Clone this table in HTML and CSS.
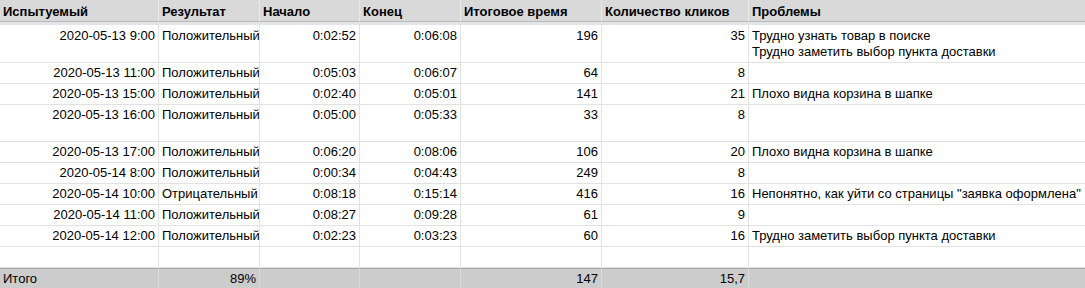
FILE: index.html
```html
<!DOCTYPE html>
<html lang="ru">
<head>
<meta charset="utf-8">
<title>Результаты тестирования</title>
<link rel="stylesheet" href="styles.css">
</head>
<body>
<table class="sheet">
  <colgroup>
    <col class="c1"><col class="c2"><col class="c3"><col class="c4"><col class="c5"><col class="c6"><col class="c7">
  </colgroup>
  <thead>
    <tr>
      <th>Испытуемый</th><th>Результат</th><th>Начало</th><th>Конец</th><th>Итоговое время</th><th>Количество кликов</th><th>Проблемы</th>
    </tr>
  </thead>
  <tbody>
    <tr class="two">
      <td class="num">2020-05-13 9:00</td><td>Положительный</td><td class="num">0:02:52</td><td class="num">0:06:08</td><td class="num">196</td><td class="num">35</td><td>Трудно узнать товар в поиске<br>Трудно заметить выбор пункта доставки</td>
    </tr>
    <tr>
      <td class="num">2020-05-13 11:00</td><td>Положительный</td><td class="num">0:05:03</td><td class="num">0:06:07</td><td class="num">64</td><td class="num">8</td><td></td>
    </tr>
    <tr>
      <td class="num">2020-05-13 15:00</td><td>Положительный</td><td class="num">0:02:40</td><td class="num">0:05:01</td><td class="num">141</td><td class="num">21</td><td>Плохо видна корзина в шапке</td>
    </tr>
    <tr class="two">
      <td class="num">2020-05-13 16:00</td><td>Положительный</td><td class="num">0:05:00</td><td class="num">0:05:33</td><td class="num">33</td><td class="num">8</td><td></td>
    </tr>
    <tr>
      <td class="num">2020-05-13 17:00</td><td>Положительный</td><td class="num">0:06:20</td><td class="num">0:08:06</td><td class="num">106</td><td class="num">20</td><td>Плохо видна корзина в шапке</td>
    </tr>
    <tr>
      <td class="num">2020-05-14 8:00</td><td>Положительный</td><td class="num">0:00:34</td><td class="num">0:04:43</td><td class="num">249</td><td class="num">8</td><td></td>
    </tr>
    <tr>
      <td class="num">2020-05-14 10:00</td><td>Отрицательный</td><td class="num">0:08:18</td><td class="num">0:15:14</td><td class="num">416</td><td class="num">16</td><td>Непонятно, как уйти со страницы "заявка оформлена"</td>
    </tr>
    <tr>
      <td class="num">2020-05-14 11:00</td><td>Положительный</td><td class="num">0:08:27</td><td class="num">0:09:28</td><td class="num">61</td><td class="num">9</td><td></td>
    </tr>
    <tr>
      <td class="num">2020-05-14 12:00</td><td>Положительный</td><td class="num">0:02:23</td><td class="num">0:03:23</td><td class="num">60</td><td class="num">16</td><td>Трудно заметить выбор пункта доставки</td>
    </tr>
    <tr>
      <td></td><td></td><td></td><td></td><td></td><td></td><td></td>
    </tr>
  </tbody>
  <tfoot>
    <tr>
      <td>Итого</td><td class="num">89%</td><td></td><td></td><td class="num">147</td><td class="num">15,7</td><td></td>
    </tr>
  </tfoot>
</table>
</body>
</html>
```

FILE: styles.css
```css
html, body {
  margin: 0;
  padding: 0;
  background: #ffffff;
}

.sheet {
  border-collapse: separate;
  border-spacing: 0;
  table-layout: fixed;
  width: 1085px;
  font-family: "Liberation Sans", Arial, sans-serif;
  font-size: 13px;
  line-height: 16px;
  color: #000000;
}

.c1 { width: 159px; }
.c2 { width: 101px; }
.c3 { width: 100px; }
.c4 { width: 101px; }
.c5 { width: 141px; }
.c6 { width: 147px; }
.c7 { width: 336px; }

.sheet th,
.sheet td {
  padding: 2px 3px;
  text-align: left;
  vertical-align: top;
  white-space: nowrap;
  overflow: hidden;
  border-right: 1px solid #e2e2e2;
  border-bottom: 1px solid #e2e2e2;
  height: 16px;
}

.sheet th:last-child,
.sheet td:last-child {
  border-right: none;
}

.sheet thead th {
  background: #d9d9d9;
  font-weight: bold;
  padding: 4px 3px 1px;
  border-right: 1px solid #e9e9e9;
  border-bottom: 1px solid #b9b9b9;
}

.sheet tbody tr:first-child td {
  border-top: 3px solid #e3e5e9;
  padding-top: 3px;
}

.sheet td.num {
  text-align: right;
}

.sheet tr.two td {
  height: 32px;
}

.sheet tfoot td {
  background: #cccccc;
  border-top: 1px solid #a9a9a9;
  border-right: 1px solid #d9d9d9;
  border-bottom: none;
  padding: 2px 3px 2px;
}
```
